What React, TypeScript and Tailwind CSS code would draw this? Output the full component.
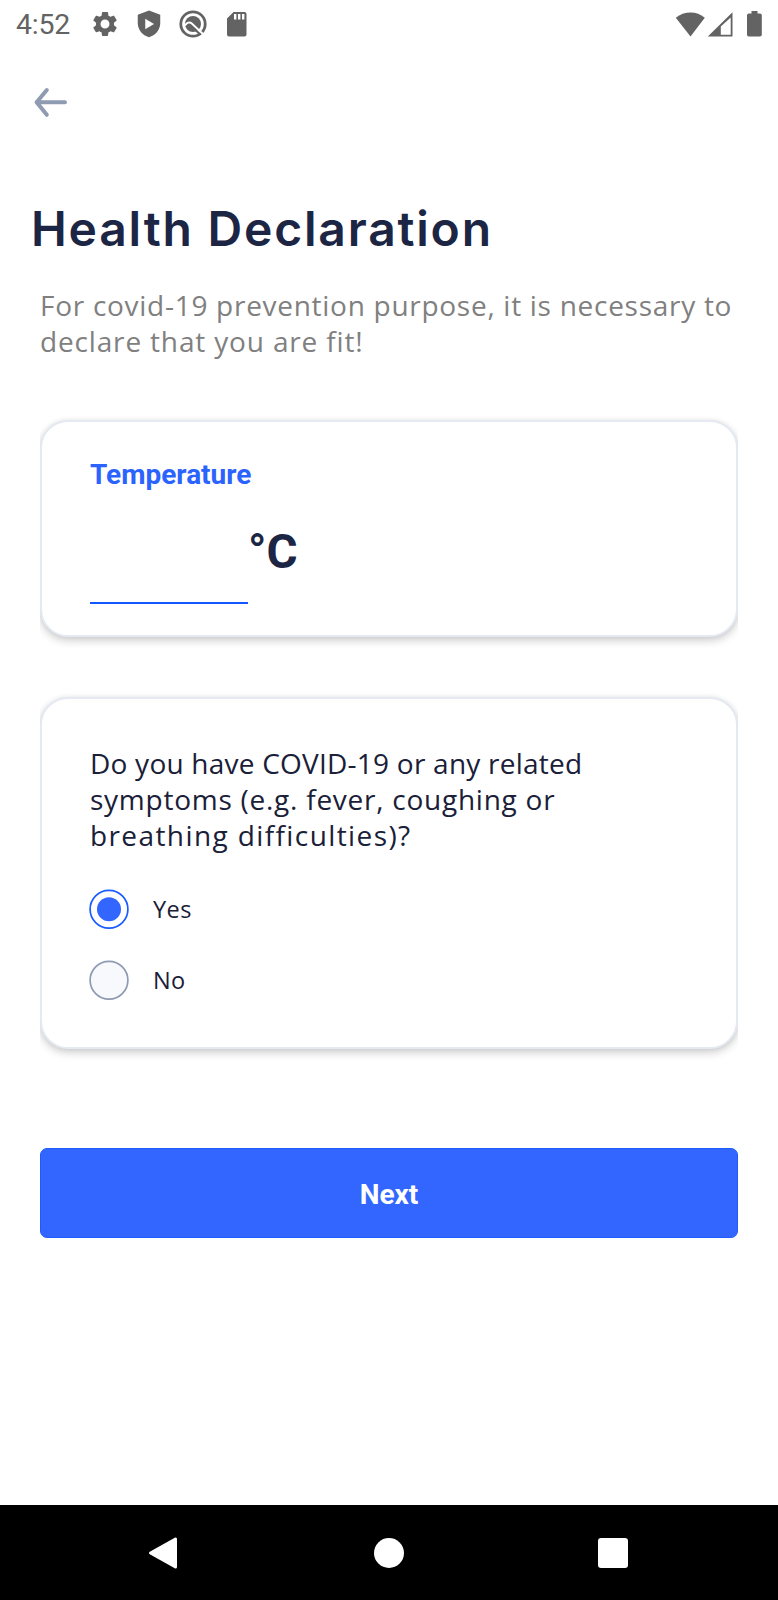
import React, { useState } from "react";

const body = "font-['Open_Sans','Noto_Sans',sans-serif]";

function StatusBar() {
  return (
    <header className="flex h-12 items-center justify-between pl-4 pr-[15px] text-[#636363]">
      <div className="flex items-center">
        <span className="w-[74px] pt-[2px] font-['Roboto',sans-serif] text-[28.500px] leading-[46px] tracking-[-0.2px]">4:52</span>
        <svg className="h-[30px] w-[30px]" viewBox="0 0 24 24" fill="currentColor">
          <path d="M19.14 12.94c.04-.3.06-.61.06-.94 0-.32-.02-.64-.07-.94l2.03-1.58a.49.49 0 0 0 .12-.61l-1.92-3.32a.49.49 0 0 0-.59-.22l-2.39.96c-.5-.38-1.03-.7-1.62-.94l-.36-2.54a.48.48 0 0 0-.48-.41h-3.84a.47.47 0 0 0-.47.41l-.36 2.54c-.59.24-1.13.57-1.62.94l-2.39-.96a.48.48 0 0 0-.59.22L2.74 8.87a.47.47 0 0 0 .12.61l2.03 1.58c-.05.3-.09.63-.09.94s.02.64.07.94l-2.03 1.58a.49.49 0 0 0-.12.61l1.92 3.32c.12.22.37.29.59.22l2.39-.96c.5.38 1.03.7 1.62.94l.36 2.54c.05.24.24.41.48.41h3.84c.24 0 .44-.17.47-.41l.36-2.54c.59-.24 1.13-.56 1.62-.94l2.39.96c.22.08.47 0 .59-.22l1.92-3.32a.47.47 0 0 0-.12-.61zM12 15.6A3.61 3.61 0 0 1 8.4 12c0-1.98 1.62-3.6 3.6-3.6s3.6 1.62 3.6 3.6-1.62 3.6-3.6 3.6z" />
        </svg>
        <svg className="ml-[14px] h-[30px] w-[30px]" viewBox="0 0 24 24" fill="currentColor">
          <path fillRule="evenodd" d="M12 1.200 3 4.600v6.600c0 5.300 3.800 10 9 11.300 5.200-1.300 9-6 9-11.300V4.600zM9 7.800l7 4.200-7 4.200z" />
        </svg>
        <svg className="ml-[14px] h-[30px] w-[30px]" viewBox="0 0 30 30" fill="none">
          <circle cx="15" cy="15" r="12.200" stroke="currentColor" strokeWidth="2.800" />
          <circle cx="15" cy="15" r="8" fill="currentColor" />
          <path d="M7 16.500C9 13.500 11.500 12.500 14 14.700L25.500 25.500" stroke="#fff" strokeWidth="2" />
          <path d="M11.500 15.500 22 25.200" stroke="currentColor" strokeWidth="2" />
        </svg>
        <svg className="ml-[18px] h-[26px] w-[22px]" viewBox="0 0 22 26" fill="currentColor">
          <path fillRule="evenodd" d="M7.500 1H18.500a2 2 0 0 1 2 2v20.500a2 2 0 0 1-2 2H3a2 2 0 0 1-2-2V7.500zM8 3v5.500h2.400V3zm4 0v5.500h2.400V3zm4 0v5.500h2.400V3z" />
        </svg>
      </div>
      <div className="flex items-center">
        <svg className="h-[25px] w-[30px]" viewBox="0 0 30 25" fill="currentColor">
          <path d="M15.500 24.500.8 5.800C5 2.400 10 .5 15.500 .5s10 1.900 14.300 5.300z" />
        </svg>
        <svg className="ml-[2px] h-[25px] w-[26px]" viewBox="0 0 26 25" fill="currentColor">
          <path fillRule="evenodd" d="M25.500.2V24.500H.8zM23.700 5.500 13.800 14.500v8.200h9.900z" />
        </svg>
        <svg className="ml-[13px] h-[26px] w-[17px]" viewBox="0 0 17 26" fill="currentColor">
          <path d="M5.500 0h6v2.500H14a1.800 1.800 0 0 1 1.800 1.800v19.400A1.800 1.800 0 0 1 14 25.500H2.800A1.800 1.800 0 0 1 1 23.700V4.300a1.800 1.800 0 0 1 1.800-1.800h2.700z" />
        </svg>
      </div>
    </header>
  );
}

function Card({ className, children }: { className: string; children: React.ReactNode }) {
  return (
    <div className="overflow-x-clip">
      <section
        className={`rounded-[28px] border-2 border-[#e4e9f2] bg-white px-12 shadow-[0_4px_9px_rgba(0,0,0,0.18),0_0_5px_rgba(0,0,0,0.07)] ${className}`}
      >
        {children}
      </section>
    </div>
  );
}

function Radio({ label, checked, onSelect }: { label: string; checked: boolean; onSelect: () => void }) {
  return (
    <button type="button" role="radio" aria-checked={checked} onClick={onSelect} className="-ml-px flex h-10 items-center">
      <svg className="size-10" viewBox="0 0 40 40">
        <circle cx="20" cy="20.200" r="18.900" fill={checked ? "#fff" : "#f7f9fc"} stroke={checked ? "#1b5cff" : "#8f9bb3"} strokeWidth="1.700" />
        {checked && <circle cx="20" cy="20.200" r="12" fill="#3366ff" />}
      </svg>
      <span className={`ml-6 text-[23.500px] leading-10 tracking-[0.4px] text-[#192038] ${body}`}>{label}</span>
    </button>
  );
}

export default function App() {
  const [answer, setAnswer] = useState("Yes");
  return (
    <div className="flex h-[1600px] w-[778px] flex-col bg-white">
      <StatusBar />
      <div className="flex h-[108px] items-start pl-[31px] pt-[36px]">
        <svg className="h-[36px] w-[38px]" viewBox="0 0 38 36" fill="none" stroke="#8f9bb3" strokeWidth="4" strokeLinecap="round" strokeLinejoin="round">
          <path d="M34 18.300H5.600M15.800 6 5.600 18.300 15.800 30.800" />
        </svg>
      </div>
      <main className="flex grow flex-col px-10">
        <h1 className="-ml-[9px] mt-[40px] h-[66px] whitespace-nowrap font-['Inter','Noto_Sans',sans-serif] text-[48px] font-semibold leading-[66px] tracking-[1.800px] text-[#1c2644]">
          Health Declaration
        </h1>
        <p className={`mt-[25px] flex flex-col whitespace-nowrap text-[28px] leading-9 text-[#808080] ${body}`}>
          <span className="tracking-[0.720px]">For covid-19 prevention purpose, it is necessary to</span>
          <span className="tracking-[0.840px]">declare that you are fit!</span>
        </p>
        <div className="mt-[61px]">
          <Card className="h-[217px] pt-[35px]">
            <div className="font-['Roboto',sans-serif] text-[28px] font-bold leading-9 text-[#2b63ff]">Temperature</div>
            <div className="mt-[8px] flex h-[103px]">
              <input aria-label="Temperature" className="w-[158px] border-b-2 border-[#1257ff] bg-transparent text-4xl outline-none" />
              <span className="pt-[23px] font-['Roboto',sans-serif] text-[47.500px] font-bold leading-[56px] text-[#1c2644]">°C</span>
            </div>
          </Card>
        </div>
        <div className="mt-[60px]">
          <Card className="h-[352px] pt-[46px]">
            <p className={`flex flex-col whitespace-nowrap text-[28px] leading-9 text-[#192038] ${body}`}>
              <span className="tracking-[0.230px]">Do you have COVID-19 or any related</span>
              <span className="tracking-[0.750px]">symptoms (e.g. fever, coughing or</span>
              <span className="tracking-[1.400px]">breathing difficulties)?</span>
            </p>
            <div role="radiogroup" className="mt-[36px] flex flex-col gap-[31px]">
              {["Yes", "No"].map((option) => (
                <Radio key={option} label={option} checked={answer === option} onSelect={() => setAnswer(option)} />
              ))}
            </div>
          </Card>
        </div>
        <button type="button" className="mt-[99px] h-[90px] rounded-[7px] border border-[#1f5cff] bg-[#3366ff] pt-1 font-['Roboto',sans-serif] text-[28px] font-bold text-white">
          Next
        </button>
      </main>
      <nav className="flex h-[95px] items-center justify-between bg-black pl-[148px] pr-[150px]">
        <svg className="h-[34px] w-[30px]" viewBox="0 0 30 34" fill="#fff" stroke="#fff" strokeWidth="3" strokeLinejoin="round">
          <path d="M27.500 3v28L2.500 17z" />
        </svg>
        <span className="relative left-px size-[30px] rounded-full bg-white" />
        <span className="size-[30px] rounded-[3px] bg-white" />
      </nav>
    </div>
  );
}
